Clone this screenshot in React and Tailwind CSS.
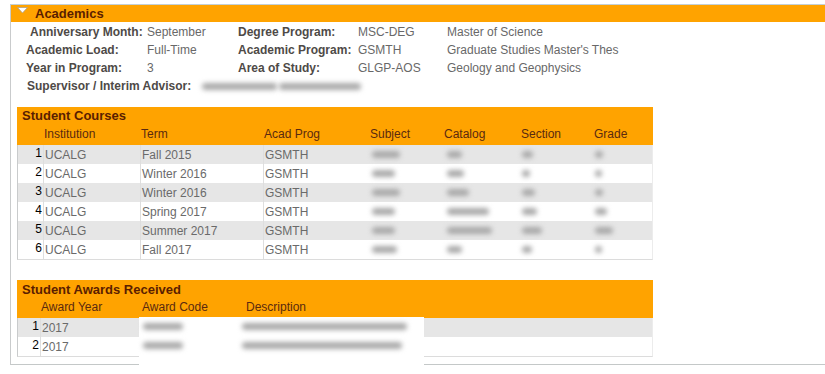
import React from "react";

const courses = [
  ["Fall 2015", [28, 15, 11, 8]],
  ["Winter 2016", [23, 17, 8, 7]],
  ["Winter 2016", [28, 22, 13, 8]],
  ["Spring 2017", [23, 42, 15, 12]],
  ["Summer 2017", [23, 45, 20, 18]],
  ["Fall 2017", [25, 15, 10, 7]],
];

function Blob({ w }) {
  return (
    <div
      className="h-[7px] rounded-full blur-[2.5px] bg-[#a9a9a9]"
      style={{ width: w }}
    />
  );
}

function Triangle() {
  return (
    <svg width="11" height="7" viewBox="0 0 11 7" className="block">
      <polygon points="0.5,0.5 10.5,0.5 5.5,6" fill="#ffffff" stroke="#b0a080" strokeWidth="0.8" />
    </svg>
  );
}

export default function App() {
  return (
    <div className="w-[825px] h-[374px] bg-white overflow-hidden font-['Liberation_Sans',Arial,sans-serif] text-[12px] leading-none">
      <div className="ml-[10px] mt-[4px] h-[361px] border-l border-t border-b border-l-[#c9cbcc] border-t-[#c3d0d6] border-b-[#c4c8c8]">
        {/* Academics header */}
        <div className="h-[17px] bg-[#ffa300] flex items-center">
          <div className="ml-[6px] mt-[-6px]">
            <Triangle />
          </div>
          <span className="ml-[7px] text-[13px] font-bold text-[#5a1e00]">Academics</span>
        </div>

        {/* Info */}
        <div className="pt-[1px] pl-[15px] grid grid-cols-[121px_91px_120px_89px_auto] auto-rows-[18px] items-center">
          <span className="pl-[4px] font-bold text-[#4e4a47]">Anniversary Month:</span>
          <span className="text-[#686868]">September</span>
          <span className="font-bold text-[#4e4a47]">Degree Program:</span>
          <span className="text-[#686868]">MSC-DEG</span>
          <span className="text-[#686868]">Master of Science</span>

          <span className="font-bold text-[#4e4a47]">Academic Load:</span>
          <span className="text-[#686868]">Full-Time</span>
          <span className="font-bold text-[#4e4a47]">Academic Program:</span>
          <span className="text-[#686868]">GSMTH</span>
          <span className="text-[#686868]">Graduate Studies Master's Thes</span>

          <span className="font-bold text-[#4e4a47]">Year in Program:</span>
          <span className="text-[#686868]">3</span>
          <span className="font-bold text-[#4e4a47]">Area of Study:</span>
          <span className="text-[#686868]">GLGP-AOS</span>
          <span className="text-[#686868]">Geology and Geophysics</span>

          <span className="col-span-5 flex items-center">
            <span className="pl-[1px] w-[176px] font-bold text-[#4e4a47]">Supervisor / Interim Advisor:</span>
            <span className="flex items-center gap-[2px]">
              <Blob w={75} />
              <Blob w={82} />
            </span>
          </span>
        </div>

        {/* Student Courses */}
        <div className="ml-[6px] mt-[12px] w-[636px]">
          <div className="bg-[#ffa300]">
            <div className="h-[17px] flex items-center pl-[5px] text-[13px] font-bold text-[#5a1e00]">Student Courses</div>
            <div className="h-[21px] flex items-center text-[#5a2a10] pb-[2px]">
              <span className="w-[26px]" />
              <span className="w-[97px] pl-[1px]">Institution</span>
              <span className="w-[123px] pl-[1px]">Term</span>
              <span className="w-[105px] pl-[1px]">Acad Prog</span>
              <span className="w-[74px] pl-[2px]">Subject</span>
              <span className="w-[77px] pl-[2px]">Catalog</span>
              <span className="w-[73px] pl-[2px]">Section</span>
              <span className="pl-[2px]">Grade</span>
            </div>
          </div>
          <div className="border-l border-b border-r border-l-[#c9cbcc] border-b-[#dcdcdc] border-r-[#ececec]">
            {courses.map(([term, blobs], i) => (
              <div
                key={i}
                className={`h-[19px] flex ${i % 2 === 0 ? "bg-[#e6e6e6]" : "bg-white"}`}
              >
                <span className="w-[25px] text-right pr-[1px] pt-[2px] text-black text-[12px]">{i + 1}</span>
                <span className="w-[97px] border-l border-[#dedede] flex items-center pl-[1px] text-[#6a6a6a]">UCALG</span>
                <span className="w-[123px] border-l border-[#dedede] flex items-center pl-[1px] text-[#6a6a6a]">{term}</span>
                <span className="w-[105px] border-l border-[#dedede] flex items-center pl-[1px] text-[#6a6a6a]">GSMTH</span>
                <span className="w-[74px] flex items-center pl-[4px]"><Blob w={blobs[0]} /></span>
                <span className="w-[77px] flex items-center pl-[5px]"><Blob w={blobs[1]} /></span>
                <span className="w-[73px] flex items-center pl-[3px]"><Blob w={blobs[2]} /></span>
                <span className="flex items-center pl-[3px]"><Blob w={blobs[3]} /></span>
              </div>
            ))}
          </div>
        </div>

        {/* Student Awards */}
        <div className="ml-[6px] mt-[20px] w-[636px] relative">
          <div className="bg-[#ffa300]">
            <div className="h-[18px] flex items-center pl-[5px] text-[13px] font-bold text-[#5a1e00]">Student Awards Received</div>
            <div className="h-[20px] flex items-center text-[#5a2a10] pb-[2px]">
              <span className="w-[23px]" />
              <span className="w-[101px] pl-[1px]">Award Year</span>
              <span className="w-[103px] pl-[1px]">Award Code</span>
              <span className="pl-[2px]">Description</span>
            </div>
          </div>
          <div className="border-l border-b border-r border-l-[#c9cbcc] border-b-[#dcdcdc] border-r-[#ececec]">
            {[0, 1].map((i) => (
              <div key={i} className={`h-[19px] flex ${i === 0 ? "bg-[#e6e6e6]" : "bg-white"}`}>
                <span className="w-[22px] text-right pr-[1px] pt-[2px] text-black">{i + 1}</span>
                <span className="w-[101px] border-l border-[#dedede] flex items-center pl-[1px] text-[#6a6a6a]">2017</span>
              </div>
            ))}
          </div>
          {/* redaction overlay */}
          <div className="absolute left-[122px] top-[37px] w-[285px] h-[62px] bg-white flex flex-col pt-[6px] gap-[12px]">
            <div className="flex items-center">
              <span className="w-[103px] pl-[4px]"><Blob w={40} /></span>
              <Blob w={165} />
            </div>
            <div className="flex items-center">
              <span className="w-[103px] pl-[4px]"><Blob w={40} /></span>
              <Blob w={160} />
            </div>
          </div>
        </div>
      </div>
    </div>
  );
}
